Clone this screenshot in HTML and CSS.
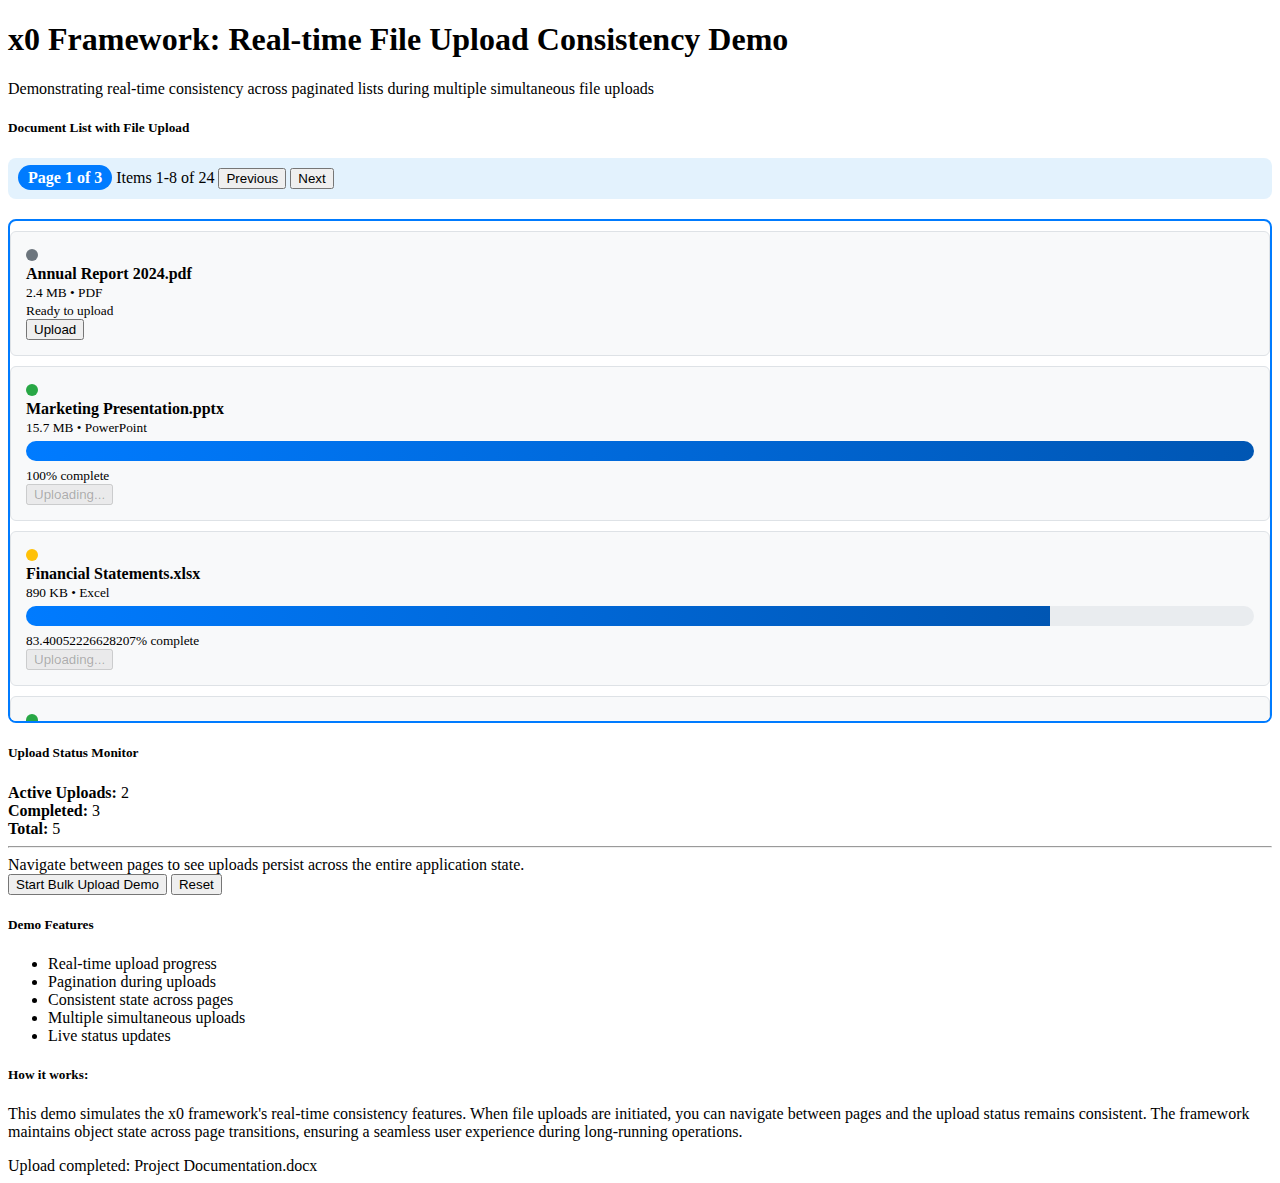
FILE: index.html
```html
<!DOCTYPE html>
<html>
<head>
<meta charset="utf-8">
<title>x0 Framework Demo</title>
<link rel="stylesheet" href="styles.css">
</head>
<body>
<h1>x0 Framework: Real-time File Upload Consistency Demo</h1>
<p>Demonstrating real-time consistency across paginated lists during multiple simultaneous file uploads</p>
<h5>Document List with File Upload</h5>
<div class="pager"><span class="badge">Page 1 of 3</span> Items 1-8 of 24 <button>Previous</button> <button>Next</button></div>
<div class="list">
  <div class="item">
    <div><span class="dot dot-gray"></span></div>
    <div class="name">Annual Report 2024.pdf</div>
    <div class="meta">2.4 MB • PDF</div>
    <div class="status">Ready to upload</div>
    <div class="actions"><button>Upload</button></div>
  </div>
  <div class="item">
    <div><span class="dot dot-green"></span></div>
    <div class="name">Marketing Presentation.pptx</div>
    <div class="meta">15.7 MB • PowerPoint</div>
    <div class="track"><div class="fill" style="width:100%"></div></div>
    <div class="status">100% complete</div>
    <div class="actions"><button disabled>Uploading...</button></div>
  </div>
  <div class="item">
    <div><span class="dot dot-yellow"></span></div>
    <div class="name">Financial Statements.xlsx</div>
    <div class="meta">890 KB • Excel</div>
    <div class="track"><div class="fill" style="width:83.40052226628207%"></div></div>
    <div class="status">83.40052226628207% complete</div>
    <div class="actions"><button disabled>Uploading...</button></div>
  </div>
  <div class="item">
    <div><span class="dot dot-green"></span></div>
    <div class="name">Project Documentation.docx</div>
    <div class="meta">3.1 MB • Word</div>
    <div class="track"><div class="fill" style="width:100%"></div></div>
    <div class="status">100% complete</div>
    <div class="actions"><button disabled>Uploading...</button></div>
  </div>
</div>
<h5>Upload Status Monitor</h5>
<div class="stats">
  <div><strong>Active Uploads:</strong> 2</div>
  <div><strong>Completed:</strong> 3</div>
  <div><strong>Total:</strong> 5</div>
</div>
<hr>
<div>Navigate between pages to see uploads persist across the entire application state.</div>
<div><button>Start Bulk Upload Demo</button> <button>Reset</button></div>
<h5>Demo Features</h5>
<ul>
  <li>Real-time upload progress</li>
  <li>Pagination during uploads</li>
  <li>Consistent state across pages</li>
  <li>Multiple simultaneous uploads</li>
  <li>Live status updates</li>
</ul>
<h5>How it works:</h5>
<p>This demo simulates the x0 framework's real-time consistency features. When file uploads are initiated, you can navigate between pages and the upload status remains consistent. The framework maintains object state across page transitions, ensuring a seamless user experience during long-running operations.</p>
<p>Upload completed: Project Documentation.docx</p>
</body>
</html>
```

FILE: styles.css
```css
html {
  margin: 0;
  padding: 0;
}

body {
  margin: 0;
  padding: 0 8px 8px;
  font-family: "Liberation Serif", "Times New Roman", serif;
  font-size: 16px;
  color: #000;
  background: #fff;
}

h1 {
  margin: 21.44px 0;
}

button {
  font-family: "Liberation Sans", Arial, sans-serif;
  font-size: 13.333px;
}

.pager {
  background: #e3f2fd;
  border-radius: 8px;
  padding: 10px;
  margin: 20px 0;
}

.badge {
  background: #007bff;
  color: #fff;
  font-weight: bold;
  padding: 4px 10px;
  border-radius: 16px;
}

.list {
  border: 2px solid #007bff;
  border-radius: 8px;
  max-height: 500px;
  overflow: hidden;
}

.item {
  background: #f8f9fa;
  border: 1px solid #dee2e6;
  border-radius: 6px;
  padding: 15px;
  margin: 10px 0;
}

.dot {
  display: inline-block;
  width: 12px;
  height: 12px;
  border-radius: 50%;
}

.dot-gray { background: #6c757d; }
.dot-green { background: #28a745; }
.dot-yellow { background: #ffc107; }

.name {
  font-weight: bold;
}

.meta {
  font-size: 13.333px;
  margin: 2px 0;
}

.status {
  font-size: 13.333px;
  margin: 0;
}

.track {
  height: 20px;
  background: #e9ecef;
  border-radius: 10px;
  overflow: hidden;
  margin: 5px 0 7px;
}

.fill {
  height: 100%;
  background: linear-gradient(90deg, #007bff, #0056b3);
}

.actions {
  margin: 0;
}

.stats {
  margin: 0;
}
```
